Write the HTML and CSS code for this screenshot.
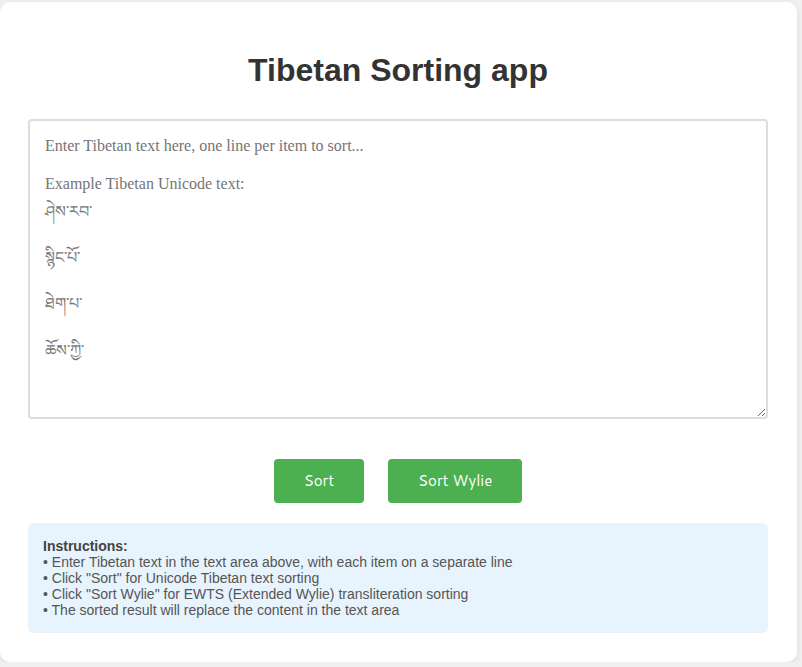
FILE: index.html
```html
<!DOCTYPE html>
<html lang="en">
<head>
<meta charset="utf-8">
<title>Tibetan Sorting app</title>
<link rel="stylesheet" href="styles.css">
</head>
<body>
<div class="card">
  <h1 class="title">Tibetan Sorting app</h1>
  <div class="field">
    <textarea class="input" placeholder=" " aria-label="Enter Tibetan text here, one line per item to sort"></textarea>
    <div class="hint" aria-hidden="true">
      <div class="hint-line">Enter Tibetan text here, one line per item to sort...</div>
      <div class="hint-line hint-blank"></div>
      <div class="hint-line">Example Tibetan Unicode text:</div>
      <div class="hint-line hint-tib">ཤེས་རབ་</div>
      <div class="hint-line hint-blank"></div>
      <div class="hint-line hint-tib">སྙིང་པོ་</div>
      <div class="hint-line hint-blank"></div>
      <div class="hint-line hint-tib">ཐེག་པ་</div>
      <div class="hint-line hint-blank"></div>
      <div class="hint-line hint-tib">ཆོས་ཀྱི་</div>
    </div>
  </div>
  <div class="actions">
    <button class="btn">Sort</button>
    <button class="btn">Sort Wylie</button>
  </div>
  <div class="info">
    <strong>Instructions:</strong><br>
    • Enter Tibetan text in the text area above, with each item on a separate line<br>
    • Click "Sort" for Unicode Tibetan text sorting<br>
    • Click "Sort Wylie" for EWTS (Extended Wylie) transliteration sorting<br>
    • The sorted result will replace the content in the text area
  </div>
</div>
</body>
</html>
```
FILE: styles.css
```css
html, body {
  margin: 0;
  padding: 0;
}
body {
  background: #f0f0f0;
  padding-top: 2px;
  font-family: "Liberation Sans", Arial, sans-serif;
}
.card {
  width: 797px;
  box-sizing: border-box;
  background: #fff;
  border-radius: 10px;
  box-shadow: 0 2px 6px rgba(0, 0, 0, 0.08);
  padding: 50px 29px 29px 28px;
}
.title {
  margin: 0 0 30px;
  text-align: center;
  font-size: 32px;
  font-weight: bold;
  color: #333;
  line-height: 37px;
}
.field {
  position: relative;
}
.input {
  display: block;
  width: 100%;
  height: 300px;
  box-sizing: border-box;
  border: 2px solid #ddd;
  border-radius: 4px;
  padding: 15px;
  font-family: "Liberation Serif", serif;
  font-size: 16px;
  line-height: 1.2;
  color: #333;
  resize: vertical;
  background: #fff;
  margin: 0;
}
.hint {
  position: absolute;
  top: 0;
  left: 0;
  right: 0;
  padding: 17px;
  font-family: "Liberation Serif", serif;
  font-size: 16px;
  line-height: 1.2;
  color: #757575;
  pointer-events: none;
}
.input:not(:placeholder-shown) + .hint {
  display: none;
}
.hint-blank {
  height: 1.2em;
}
.hint-tib {
  padding-top: 8px;
}
.actions {
  display: flex;
  justify-content: center;
  gap: 24px;
  margin: 40px 0 20px;
}
.btn {
  background: #4caf50;
  color: #fff;
  border: none;
  border-radius: 4px;
  padding: 12px 30px;
  font-family: Cantarell, Lato, sans-serif;
  font-size: 15px;
  line-height: 20px;
  cursor: pointer;
}
.info {
  background: #e7f3fd;
  border-radius: 6px;
  padding: 15px;
  font-size: 14px;
  line-height: 16px;
  color: #555;
}
.info strong {
  color: #444;
}
```
